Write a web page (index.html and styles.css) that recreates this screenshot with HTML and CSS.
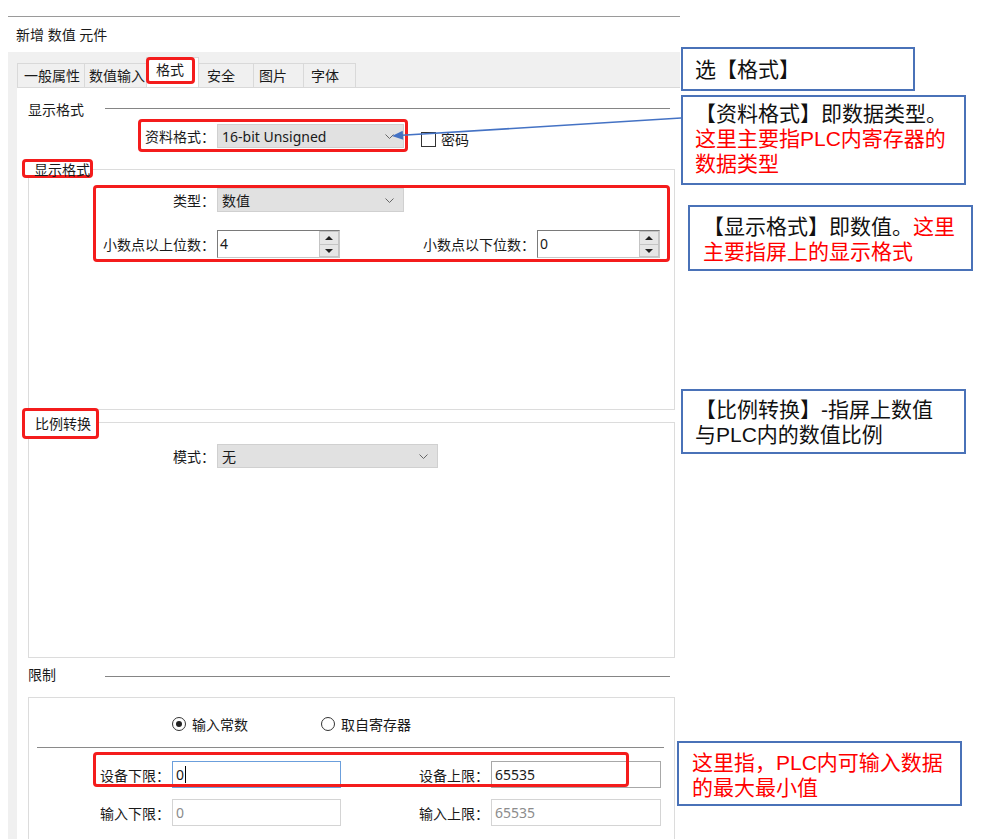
FILE: index.html
```html
<!DOCTYPE html>
<html lang="zh-CN">
  <head>
    <meta charset="UTF-8" />
    <title>新增 数值 元件 - 格式</title>
    <link rel="stylesheet" href="styles.css">
  </head>
  <body>
    <div class="page">
      <div class="dialog">
        <div class="title">新增 数值 元件</div>

        <div class="band">
          <div class="tabs">
            <div class="tab t1">一般属性</div>
            <div class="tab t2">数值输入</div>
            <div class="tab tab-on"><span class="mark tab-mark">格式</span></div>
            <div class="tab t4">安全</div>
            <div class="tab t5">图片</div>
            <div class="tab t6">字体</div>
          </div>

          <div class="panel">
            <!-- 显示格式 / 资料格式 -->
            <div class="heading">
              <span class="heading-text">显示格式</span>
              <i class="rule"></i>
            </div>

            <div class="format-row">
              <div class="mark format-mark">
                <span class="lbl w74">资料格式：</span>
                <div class="combo w187">
                  <span>16-bit Unsigned</span>
                  <svg class="chev" width="9" height="5" viewBox="0 0 9 5"><polyline points="0.5,0.5 4.5,4.5 8.5,0.5" fill="none" stroke="#666" stroke-width="1"/></svg>
                </div>
              </div>
              <div class="check">
                <span class="check-box"></span>
                <span>密码</span>
              </div>
            </div>

            <!-- 显示格式 group -->
            <div class="group-head small">
              <span class="mark legend">显示格式</span>
              <i class="edge"></i>
            </div>
            <div class="group-body g1">
              <div class="mark display-mark">
                <div class="field-row">
                  <span class="lbl w119">类型：</span>
                  <div class="combo w187">
                    <span>数值</span>
                    <svg class="chev" width="9" height="5" viewBox="0 0 9 5"><polyline points="0.5,0.5 4.5,4.5 8.5,0.5" fill="none" stroke="#666" stroke-width="1"/></svg>
                  </div>
                </div>
                <div class="field-row spin-row">
                  <span class="lbl w119">小数点以上位数：</span>
                  <div class="spin">
                    <span class="spin-text">4</span>
                    <div class="spin-btns"><span class="up"></span><span class="down"></span></div>
                  </div>
                  <span class="lbl w195">小数点以下位数：</span>
                  <div class="spin">
                    <span class="spin-text">0</span>
                    <div class="spin-btns"><span class="up"></span><span class="down"></span></div>
                  </div>
                </div>
              </div>
            </div>

            <!-- 比例转换 group -->
            <div class="group-head big">
              <span class="mark legend legend-big">比例转换</span>
              <i class="edge"></i>
            </div>
            <div class="group-body g2">
              <div class="field-row">
                <span class="lbl w186">模式：</span>
                <div class="combo w221">
                  <span>无</span>
                  <svg class="chev" width="9" height="5" viewBox="0 0 9 5"><polyline points="0.5,0.5 4.5,4.5 8.5,0.5" fill="none" stroke="#666" stroke-width="1"/></svg>
                </div>
              </div>
            </div>

            <!-- 限制 -->
            <div class="heading limit-heading">
              <span class="heading-text">限制</span>
              <i class="rule"></i>
            </div>
            <div class="limit-box">
              <div class="radio-row">
                <div class="radio radio-first"><span class="dot on"></span>输入常数</div>
                <div class="radio"><span class="dot"></span>取自寄存器</div>
              </div>
              <div class="sep"></div>
              <div class="limit-row">
                <span class="lbl w141">设备下限：</span>
                <div class="field focus">0<span class="caret"></span></div>
                <span class="lbl w148">设备上限：</span>
                <div class="field w170">65535</div>
              </div>
              <div class="limit-row second">
                <span class="lbl w141">输入下限：</span>
                <div class="field off">0</div>
                <span class="lbl w148">输入上限：</span>
                <div class="field off w170">65535</div>
              </div>
              <div class="mark limit-mark"></div>
            </div>
          </div>
        </div>
      </div>

      <div class="notes">
        <div class="note n1">选【格式】</div>
        <div class="note n2">【资料格式】即数据类型。<br><span class="red">这里主要指PLC内寄存器的<br>数据类型</span></div>
        <div class="note n3">【显示格式】即数值。<span class="red">这里<br>主要指屏上的显示格式</span></div>
        <div class="note n4">【比例转换】-指屏上数值<br>与PLC内的数值比例</div>
        <div class="note n5"><span class="red">这里指，PLC内可输入数据<br>的最大最小值</span></div>
      </div>

      <!-- arrow from the 资料格式 note to the combo box -->
      <svg class="arrow" width="1000" height="839" viewBox="0 0 1000 839">
        <line x1="681" y1="118" x2="402" y2="135.3" stroke="#4472c4" stroke-width="1.6"/>
        <polygon points="392,136 403.3,139.8 402.7,130.8" fill="#4472c4"/>
      </svg>
    </div>
  </body>
</html>
```

FILE: styles.css
```css
body {
  margin: 0;
  background-color: #fff;
  font-family: "Noto Sans", "Noto Sans CJK SC", sans-serif;
  font-size: 14px;
  color: #1a1a1a;
}

.page {
  position: relative;
  display: flex;
  width: 1000px;
  height: 839px;
  overflow: hidden;
}

.dialog {
  width: 672px;
  margin: 16px 0 0 8px;
  border-top: 1px solid #9a9a9a;
  display: flex;
  flex-direction: column;
}

.title {
  height: 35px;
  line-height: 35px;
  padding-left: 8px;
}

.band {
  flex: 1;
  background-color: #f0f0f0;
  padding: 11px 0 0 9px;
  display: flex;
  flex-direction: column;
}

/* tabs */
.tabs {
  display: flex;
  align-items: flex-end;
  height: 24px;
}

.tab {
  box-sizing: border-box;
  height: 24px;
  line-height: 23px;
  padding-left: 6px;
  border: 1px solid #d9d9d9;
  border-bottom: none;
  border-left: none;
  background-color: #f0f0f0;
}

.t1 { width: 68px; border-left: 1px solid #d9d9d9; }
.t2 { width: 62px; padding-left: 4px; }
.t4 { width: 55px; padding-left: 8px; }
.t5 { width: 50px; padding-left: 5px; }
.t6 { width: 52px; padding-left: 7px; }

.tab-on {
  width: 53px;
  height: 30px;
  padding: 0;
  background-color: #fff;
  border-left: 1px solid #d9d9d9;
  margin-left: -1px;
}

.mark {
  border: 3px solid #f41c1c;
  border-radius: 4px;
}

.tab-mark {
  display: block;
  box-sizing: border-box;
  width: 49px;
  height: 27px;
  margin: -1px 0 0 -1px;
  padding-left: 7px;
  line-height: 20px;
}

/* panel */
.panel {
  flex: 1;
  background-color: #fff;
  border-top: 1px solid #d9d9d9;
  padding: 11px 5px 0 11px;
}

.heading {
  display: flex;
  align-items: center;
  height: 20px;
}

.heading-text {
  width: 77px;
}

.rule {
  flex: 1;
  height: 1px;
  margin: 0 5px 2px 0;
  background-color: #858585;
}

.limit-heading {
  margin-top: 6px;
}

.limit-heading .rule {
  margin: 4px 5px 0 0;
}

.lbl {
  flex: none;
  text-align: right;
  margin-right: 2px;
  white-space: nowrap;
}

.w74 { width: 74px; }
.w119 { width: 119px; }
.w141 { width: 141px; }
.w148 { width: 148px; }
.w186 { width: 186px; }
.w195 { width: 195px; }

.combo {
  box-sizing: border-box;
  height: 24px;
  display: flex;
  align-items: center;
  justify-content: space-between;
  padding: 0 9px 0 4px;
  background-color: #e1e1e1;
  border: 1px solid #d0d0d0;
}

.w187 { width: 187px; }
.w221 { width: 221px; }

.format-row {
  display: flex;
  align-items: flex-start;
  height: 33px;
  margin-left: 110px;
}

.format-mark {
  display: flex;
  align-items: center;
  padding: 2px 1px 1px 0;
}

.check {
  display: flex;
  align-items: center;
  margin: 13px 0 0 13px;
  line-height: 15px;
}

.check-box {
  box-sizing: border-box;
  width: 15px;
  height: 15px;
  border: 1px solid #333;
  margin-right: 5px;
  background-color: #fff;
}

/* group boxes */
.group-head {
  display: flex;
  align-items: flex-end;
  margin-left: -6px;
}

.group-head.small {
  height: 19px;
  margin-top: 7px;
}

.group-head.big {
  height: 31px;
  margin-top: -2px;
}

.legend {
  box-sizing: border-box;
  height: 19px;
  line-height: 16px;
  padding-left: 9px;
  width: 71px;
}

.legend-big {
  height: 31px;
  line-height: 25px;
  padding-left: 10px;
  width: 77px;
}

.edge {
  flex: 1;
  box-sizing: border-box;
  height: 9px;
  border-top: 1px solid #dcdcdc;
  border-right: 1px solid #dcdcdc;
}

.big .edge {
  height: 17px;
}

.group-body {
  border: 1px solid #dcdcdc;
  border-top: none;
}

.g1 {
  height: 224px;
  padding-top: 7px;
}

.g2 {
  height: 213px;
  padding-top: 5px;
}

.display-mark {
  margin: 0 4px 0 64px;
  padding-bottom: 1px;
}

.field-row {
  display: flex;
  align-items: center;
  height: 24px;
}

.spin-row {
  height: 28px;
  margin-top: 18px;
}

.spin {
  box-sizing: border-box;
  width: 123px;
  height: 28px;
  display: flex;
  border: 1px solid #7a7a7a;
  border-right-color: #c8c8c8;
  border-bottom-color: #c8c8c8;
  background-color: #fff;
}

.spin-text {
  flex: 1;
  line-height: 26px;
  padding-left: 2px;
}

.spin-btns {
  width: 20px;
  display: flex;
  flex-direction: column;
}

.spin-btns span {
  flex: 1;
  position: relative;
  background-color: #e6e6e6;
  border: 1px solid #c4c4c4;
}

.spin-btns span + span {
  border-top: none;
}

.spin-btns span::after {
  content: "";
  position: absolute;
  left: 5px;
  top: 4px;
  border-left: 4px solid transparent;
  border-right: 4px solid transparent;
}

.spin-btns .up::after {
  border-bottom: 4px solid #222;
}

.spin-btns .down::after {
  top: 4px;
  border-top: 4px solid #222;
}

/* limits */
.limit-box {
  position: relative;
  margin-top: 13px;
  height: 160px;
  border: 1px solid #dcdcdc;
  border-bottom: none;
  padding-top: 16px;
}

.radio-row {
  display: flex;
  align-items: center;
  height: 20px;
}

.radio {
  display: flex;
  align-items: center;
}

.radio-first {
  width: 149px;
  margin-left: 143px;
}

.dot {
  box-sizing: border-box;
  width: 14px;
  height: 14px;
  border: 1px solid #333;
  border-radius: 50%;
  margin-right: 6px;
  position: relative;
}

.dot.on::after {
  content: "";
  position: absolute;
  left: 3px;
  top: 3px;
  width: 6px;
  height: 6px;
  border-radius: 50%;
  background-color: #222;
}

.sep {
  height: 1px;
  margin: 13px 10px 0 8px;
  background-color: #8a8a8a;
}

.limit-row {
  display: flex;
  align-items: center;
  height: 27px;
  margin-top: 13px;
}

.limit-row.second {
  margin-top: 11px;
}

.field {
  box-sizing: border-box;
  width: 169px;
  height: 27px;
  line-height: 25px;
  padding-left: 3px;
  border: 1px solid #a8a8a8;
  background-color: #fff;
  display: flex;
  align-items: center;
}

.field.w170 {
  width: 170px;
}

.field.focus {
  border-color: #6b9fdc;
}

.field.off {
  border-color: #d4d4d4;
  color: #8c8c8c;
}

.caret {
  display: inline-block;
  width: 1px;
  height: 17px;
  margin-left: 1px;
  background-color: #000;
}

.limit-mark {
  position: absolute;
  left: 64px;
  top: 54px;
  width: 530px;
  height: 29px;
}

/* annotation notes */
.notes {
  display: flex;
  flex-direction: column;
  align-items: flex-start;
  font-family: "Liberation Sans", "Noto Sans CJK SC", sans-serif;
  font-size: 21px;
  line-height: 25px;
  color: #111;
}

.note {
  box-sizing: border-box;
  width: 285px;
  border: 2px solid #4a72b8;
  padding-left: 12px;
  background-color: #fff;
  white-space: nowrap;
}

.red {
  color: #ff0000;
}

.n1 {
  width: 234px;
  height: 44px;
  margin: 47px 0 0 1px;
  padding-top: 8px;
}

.n2 {
  height: 90px;
  margin: 4px 0 0 1px;
  padding-top: 4px;
}

.n3 {
  height: 66px;
  margin: 20px 0 0 8px;
  padding: 7px 0 0 13px;
}

.n4 {
  height: 65px;
  margin: 118px 0 0 1px;
  padding-top: 6px;
}

.n5 {
  height: 65px;
  margin: 287px 0 0 -3px;
  padding: 7px 0 0 13px;
}

.arrow {
  position: absolute;
  left: 0;
  top: 0;
  pointer-events: none;
}
```
